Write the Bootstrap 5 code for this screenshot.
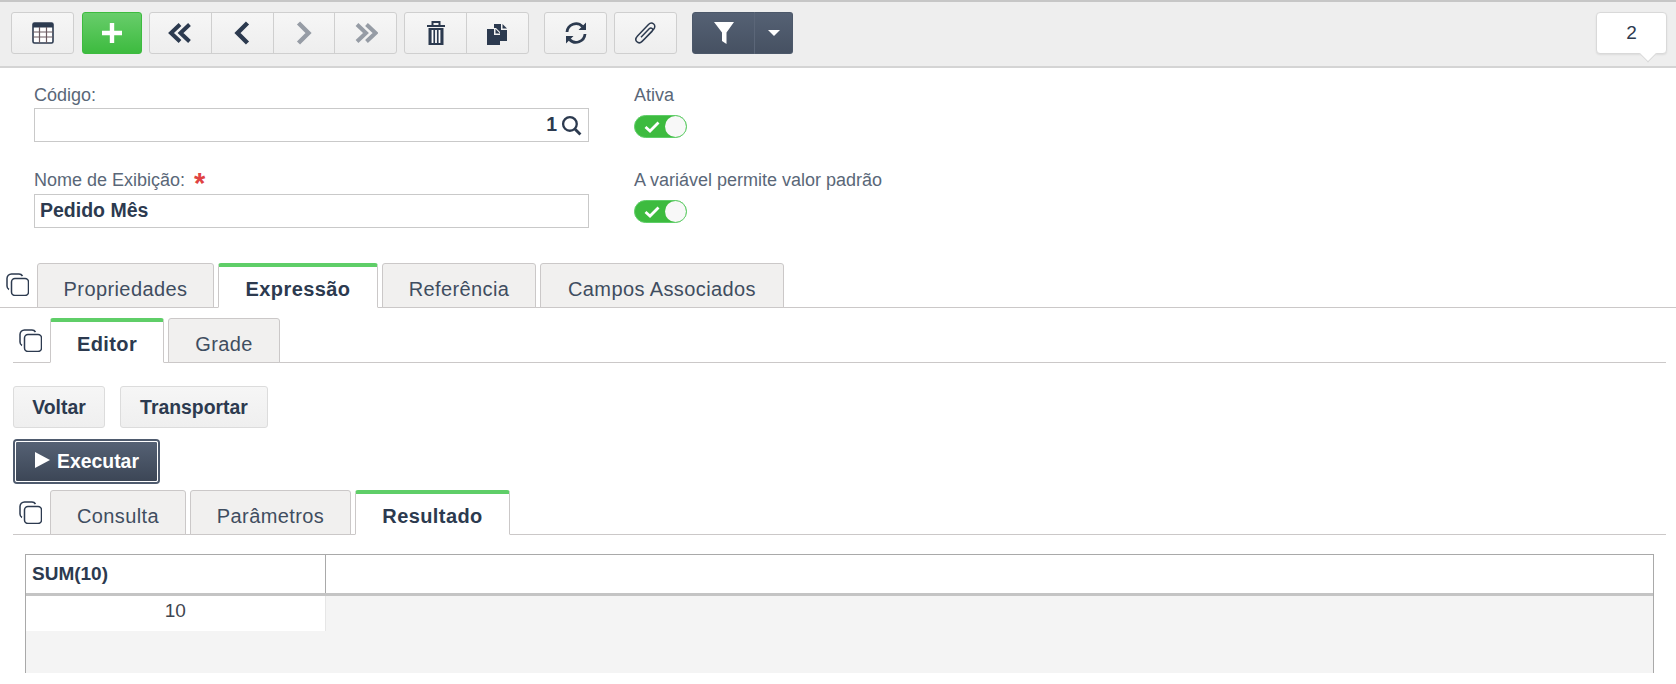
<!DOCTYPE html>
<html lang="pt-BR">
<head>
  <meta charset="UTF-8" />
  <meta name="viewport" content="width=device-width, initial-scale=1.0"/>
  <title>Variável - Pedido Mês</title>
  <link rel="stylesheet" href="https://cdn.jsdelivr.net/npm/bootstrap@5.3.0/dist/css/bootstrap.min.css">
  <style>
    html, body { height: 684px; overflow: hidden; }
    body { font-family: "Liberation Sans", Arial, sans-serif; color: #2c3a4f; background: #fff; font-size: 18px; }
    .barra { height: 68px; background: #eee; border-top: 2px solid #c6c6c6; border-bottom: 2px solid #d4d4d4; padding: 10px 9px 0 11px; }
    .btn-barra { width: 63px; height: 42px; padding: 0; display: flex; align-items: center; justify-content: center; border: 1px solid #cfcfcf; border-radius: 3px; background: linear-gradient(#f6f6f6, #eeeeee); }
    .btn-barra:hover { background: #e6e6e6; border-color: #cfcfcf; }
    .btn-novo { width: 60px; margin-left: 8px; border-color: #3dbb3f; background: linear-gradient(#68cd6b, #3dbb3f); }
    .btn-novo:hover { background: #3dbb3f; border-color: #3dbb3f; }
    .grupo-nav { margin-left: 7px; }
    .grupo-nav .btn-barra { width: 62.75px; }
    .grupo-lixo { margin-left: 7px; }
    .btn-atualizar { margin-left: 15px; }
    .btn-anexo { margin-left: 7px; }
    .grupo-filtro { margin-left: 15px; }
    .grupo-filtro .btn-barra { border-color: #4c586a; background: linear-gradient(#556174, #465162); }
    .grupo-filtro .btn-caret { width: 39px; border-left-color: #5b6678; }
    .caixa-contador { margin-left: auto; position: relative; width: 71px; height: 42px; background: #fff; border: 1px solid #d9d9d9; border-radius: 4px; font-size: 19px; display: flex; align-items: center; justify-content: center; box-shadow: 0 1px 2px rgba(0,0,0,.08); }
    .caixa-contador::after { content: ""; position: absolute; left: 45px; bottom: -7px; width: 12px; height: 12px; background: #fff; border-right: 1px solid #d9d9d9; border-bottom: 1px solid #d9d9d9; transform: rotate(45deg); }
    .formulario { padding: 17px 0 0 34px; height: 195px; }
    .col-campos { width: 555px; margin-right: 45px; }
    .rotulo { height: 20px; line-height: 20px; margin-bottom: 3px; color: #5a6778; font-size: 18px; }
    .rotulo-nome { margin-bottom: 4px; }
    .campo { height: 34px; border: 1px solid #c9c9c9; border-radius: 0; padding: 0 5px; display: flex; align-items: center; font-size: 19.5px; font-weight: 700; color: #2c3a4f; }
    .campo-busca { padding-right: 6px; }
    .espaco { height: 28px; }
    .asterisco { color: #e04343; font-weight: 700; font-size: 29px; line-height: 20px; margin-left: 4px; vertical-align: -7px; }
    .chave { width: 53px; height: 23px; margin-top: 10px; border-radius: 12px; background: #3dbb3f; border: 1px solid #5fce68; position: relative; }
    .chave svg { position: absolute; left: 9px; top: 5px; }
    .chave::after { content: ""; position: absolute; right: 0; top: 0; width: 21px; height: 21px; border-radius: 50%; background: #f8f8f8; }
    .espaco-chave { height: 32px; }
    .abas { display: flex; align-items: flex-end; flex-wrap: nowrap; border-bottom: 1px solid #cbc8c8; }
    .abas .nav-link { height: 45px; margin: 0 4px -1px 0; padding: 6px 0 0; display: flex; align-items: center; justify-content: center; color: #3f4d60; font-size: 20px; letter-spacing: .4px; background: #f1f0ef; border: 1px solid #cbc8c8; border-bottom: 1px solid #cbc8c8; border-radius: 3px 3px 0 0; }
    .abas .nav-link.active { color: #2c3a4f; font-weight: 700; background: #fff; border-top: 4px solid #5fce68; border-bottom-color: #fff; padding-top: 3px; }
    .abas-1 { height: 45px; }
    .abas-1 .aba-icone { width: 37px; padding: 0 0 10px 6px; }
    .abas-2 { height: 45px; margin: 10px 10px 0 13px; }
    .abas-2 .aba-icone { width: 37px; padding: 0 0 9px 6px; }
    .abas-3 { margin-top: 8px; }
    .aba-w177 { width: 177px; }
    .aba-w160 { width: 160px; }
    .aba-w154 { width: 154px; }
    .aba-w244 { width: 244px; }
    .aba-w114 { width: 114px; }
    .aba-w112 { width: 112px; }
    .aba-w136 { width: 136px; }
    .aba-w161 { width: 161px; }
    .aba-w155 { width: 155px; }
    .acoes { margin: 23px 0 0 13px; }
    .btn-acao { height: 42px; padding: 1px 0 0; font-size: 19.4px; font-weight: 700; color: #2c3a4f; border: 1px solid #dcdcdc; border-radius: 3px; background: linear-gradient(#f6f6f6, #efefef); }
    .btn-voltar { width: 92px; margin-right: 15px; }
    .btn-transportar { width: 148px; }
    .btn-executar { display: flex; align-items: center; justify-content: center; width: 143px; height: 41px; margin: 13px 0 0 15px; padding: 0 0 0 1px; color: #fff; font-size: 19.4px; font-weight: 700; border: 1px solid #fff; border-radius: 2px; background: linear-gradient(#556174, #3c4656); box-shadow: 0 0 0 2px #4f5b6e; }
    .btn-executar svg { margin: -4px 7px 0 0; }
    .grade-wrap { margin: 19px 22px 0 25px; height: 119px; border: 1px solid #a9a9a9; border-bottom: 0; background: #f4f4f4; }
    .tabela-resultado { table-layout: fixed; width: 100%; margin: 0; border-collapse: collapse; }
    .tabela-resultado th { height: 39px; padding: 0 6px; background: #fff; font-size: 19px; border-bottom: 3px solid #c4c4c4; color: #2c3a4f; vertical-align: middle; }
    .tabela-resultado th:first-child { border-right: 1px solid #a9a9a9; width: 299px; }
    .tabela-resultado td { height: 37px; padding: 0 0 4px; text-align: center; font-size: 19px; background: #fff; border-right: 1px solid #e6e6e6; color: #3f4650; }
    .tabela-resultado td.vazio { background: #f4f4f4; border: 0; }
  </style>
</head>
<body>

<div class="barra d-flex align-items-start">
  <button class="btn btn-barra" type="button" title="Grade">
    <svg width="22" height="22" viewBox="0 0 22 22"><rect x="1" y="1" width="20" height="20" rx="1.5" fill="#fff" stroke="#2c3a4f" stroke-width="1.6"/><rect x="1" y="1" width="20" height="4.5" fill="#2c3a4f"/><path d="M1 10h20M1 15h20M7.5 5v16M14.5 5v16" stroke="#6b5a60" stroke-width="1.2" fill="none"/></svg>
  </button>
  <button class="btn btn-barra btn-novo" type="button" title="Novo">
    <svg width="22" height="22" viewBox="0 0 22 22"><path d="M11 1v20M1 11h20" stroke="#fff" stroke-width="4.4" fill="none"/></svg>
  </button>
  <div class="btn-group grupo-nav">
    <button class="btn btn-barra" type="button"><svg width="24" height="22" viewBox="0 0 24 22"><path d="M12 2.5 3 11l9 8.5M21.5 2.5 12.5 11l9 8.5" stroke="#2c3a4f" stroke-width="4" fill="none"/></svg></button>
    <button class="btn btn-barra" type="button"><svg width="16" height="24" viewBox="0 0 16 24"><path d="M13.5 2 3.5 12l10 10" stroke="#2c3a4f" stroke-width="4.4" fill="none"/></svg></button>
    <button class="btn btn-barra" type="button"><svg width="16" height="24" viewBox="0 0 16 24"><path d="m2.5 2 10 10-10 10" stroke="#969ca5" stroke-width="4.4" fill="none"/></svg></button>
    <button class="btn btn-barra" type="button"><svg width="24" height="22" viewBox="0 0 24 22"><path d="m3 2.5 9 8.5-9 8.5M12.500 2.5l9 8.5-9 8.5" stroke="#969ca5" stroke-width="4" fill="none"/></svg></button>
  </div>
  <div class="btn-group grupo-lixo">
    <button class="btn btn-barra" type="button">
      <svg width="20" height="26" viewBox="0 0 20 26"><path d="M1 6h18M6.500 5V2h7v3" stroke="#2c3a4f" stroke-width="2" fill="none"/><path d="M2.500 8h15v17h-15z" fill="#2c3a4f"/><path d="M6.500 10v13M10 10v13M13.500 10v13" stroke="#fff" stroke-width="1.800" fill="none"/></svg>
    </button>
    <button class="btn btn-barra" type="button">
      <svg width="24" height="24" viewBox="0 0 24 24"><path d="M8 7V3h7v6h6v11h-7v-9l-4-4z" fill="#2c3a4f"/><path d="M16.500 3v4.500H21z" fill="#2c3a4f"/><path d="M1 8h7v6h6v10H1z" fill="#2c3a4f"/><path d="M9.500 8v4.500H14z" fill="#2c3a4f"/></svg>
    </button>
  </div>
  <button class="btn btn-barra btn-atualizar" type="button">
    <svg width="24" height="24" viewBox="0 0 24 24"><path d="M3 11a9 9 0 0 1 15.500-5.500M21 13a9 9 0 0 1-15.500 5.500" stroke="#2c3a4f" stroke-width="2.800" fill="none"/><path d="M22 1.500V9h-7.500zM2 22.500V15h7.500z" fill="#2c3a4f"/></svg>
  </button>
  <button class="btn btn-barra btn-anexo" type="button">
    <svg width="24" height="24" viewBox="0 0 24 24"><path d="M9 19.500 19.500 8.500c1.800-2 1.600-4.300.2-5.500s-3.500-1.300-5.200.5L3.500 15c-2.200 2.400-1.900 4.600-.6 5.800s3.500 1.300 5.200-.4L18 10.500c1-1.100.9-2.300.1-3s-1.900-.7-2.900.3L7 16.200" stroke="#2c3a4f" stroke-width="1.500" fill="none"/></svg>
  </button>
  <div class="btn-group grupo-filtro">
    <button class="btn btn-barra" type="button">
      <svg width="20" height="22" viewBox="0 0 20 22"><path d="M0 0h20l-7.500 10.500V22L8 19v-8.500z" fill="#fff"/></svg>
    </button>
    <button class="btn btn-barra btn-caret" type="button">
      <svg width="12" height="6" viewBox="0 0 12 6"><path d="M0 0h12L6 6z" fill="#fff"/></svg>
    </button>
  </div>
  <div class="caixa-contador">2</div>
</div>

<div class="formulario d-flex">
  <div class="col-campos">
    <div class="rotulo">Código:</div>
    <div class="campo campo-busca justify-content-end">
      <span>1</span>
      <svg class="ms-1" width="21" height="21" viewBox="0 0 20 20"><circle cx="8.500" cy="8.500" r="6.500" fill="none" stroke="#2c3a4f" stroke-width="2.200"/><path d="m13.500 13.500 5 5" stroke="#2c3a4f" stroke-width="2.800"/></svg>
    </div>
    <div class="espaco"></div>
    <div class="rotulo rotulo-nome">Nome de Exibição: <span class="asterisco">*</span></div>
    <div class="campo">Pedido Mês</div>
  </div>
  <div>
    <div class="rotulo">Ativa</div>
    <div class="chave"><svg width="16" height="12" viewBox="0 0 16 12"><path d="m1.500 6 4.500 4 8.500-8.500" stroke="#fff" stroke-width="2.800" fill="none"/></svg></div>
    <div class="espaco-chave"></div>
    <div class="rotulo">A variável permite valor padrão</div>
    <div class="chave"><svg width="16" height="12" viewBox="0 0 16 12"><path d="m1.500 6 4.500 4 8.500-8.500" stroke="#fff" stroke-width="2.800" fill="none"/></svg></div>
  </div>
</div>

<ul class="nav abas abas-1">
  <li class="aba-icone"><svg width="23" height="23" viewBox="0 0 23 23"><path d="M3 16.500C1.800 15.800 1 14.500 1 13V5.500A4.500 4.500 0 0 1 5.500 1H13c1.500 0 2.800.8 3.500 2" fill="none" stroke="#2c3a4f" stroke-width="1.500"/><rect x="5.500" y="5.500" width="17" height="17" rx="3.500" fill="none" stroke="#2c3a4f" stroke-width="1.500"/></svg></li>
  <li class="nav-item"><a class="nav-link aba-w177" href="#">Propriedades</a></li>
  <li class="nav-item"><a class="nav-link active aba-w160" href="#">Expressão</a></li>
  <li class="nav-item"><a class="nav-link aba-w154" href="#">Referência</a></li>
  <li class="nav-item"><a class="nav-link aba-w244" href="#">Campos Associados</a></li>
</ul>

<ul class="nav abas abas-2">
  <li class="aba-icone"><svg width="23" height="23" viewBox="0 0 23 23"><path d="M3 16.500C1.800 15.800 1 14.500 1 13V5.500A4.500 4.500 0 0 1 5.500 1H13c1.500 0 2.800.8 3.500 2" fill="none" stroke="#2c3a4f" stroke-width="1.500"/><rect x="5.500" y="5.500" width="17" height="17" rx="3.500" fill="none" stroke="#2c3a4f" stroke-width="1.500"/></svg></li>
  <li class="nav-item"><a class="nav-link active aba-w114" href="#">Editor</a></li>
  <li class="nav-item"><a class="nav-link aba-w112" href="#">Grade</a></li>
</ul>

<div class="acoes d-flex">
  <button class="btn btn-acao btn-voltar" type="button">Voltar</button>
  <button class="btn btn-acao btn-transportar" type="button">Transportar</button>
</div>
<button class="btn btn-executar" type="button">
  <svg width="15" height="16" viewBox="0 0 15 16"><path d="M0 0l15 8-15 8z" fill="#fff"/></svg>Executar
</button>

<ul class="nav abas abas-2 abas-3">
  <li class="aba-icone"><svg width="23" height="23" viewBox="0 0 23 23"><path d="M3 16.500C1.800 15.800 1 14.500 1 13V5.500A4.500 4.500 0 0 1 5.500 1H13c1.500 0 2.800.8 3.500 2" fill="none" stroke="#2c3a4f" stroke-width="1.500"/><rect x="5.500" y="5.500" width="17" height="17" rx="3.500" fill="none" stroke="#2c3a4f" stroke-width="1.500"/></svg></li>
  <li class="nav-item"><a class="nav-link aba-w136" href="#">Consulta</a></li>
  <li class="nav-item"><a class="nav-link aba-w161" href="#">Parâmetros</a></li>
  <li class="nav-item"><a class="nav-link active aba-w155" href="#">Resultado</a></li>
</ul>

<div class="grade-wrap">
  <table class="tabela-resultado">
    <thead>
      <tr><th>SUM(10)</th><th></th></tr>
    </thead>
    <tbody>
      <tr><td>10</td><td class="vazio"></td></tr>
    </tbody>
  </table>
</div>

<script src="https://cdn.jsdelivr.net/npm/bootstrap@5.3.0/dist/js/bootstrap.bundle.min.js"></script>
</body>
</html>
